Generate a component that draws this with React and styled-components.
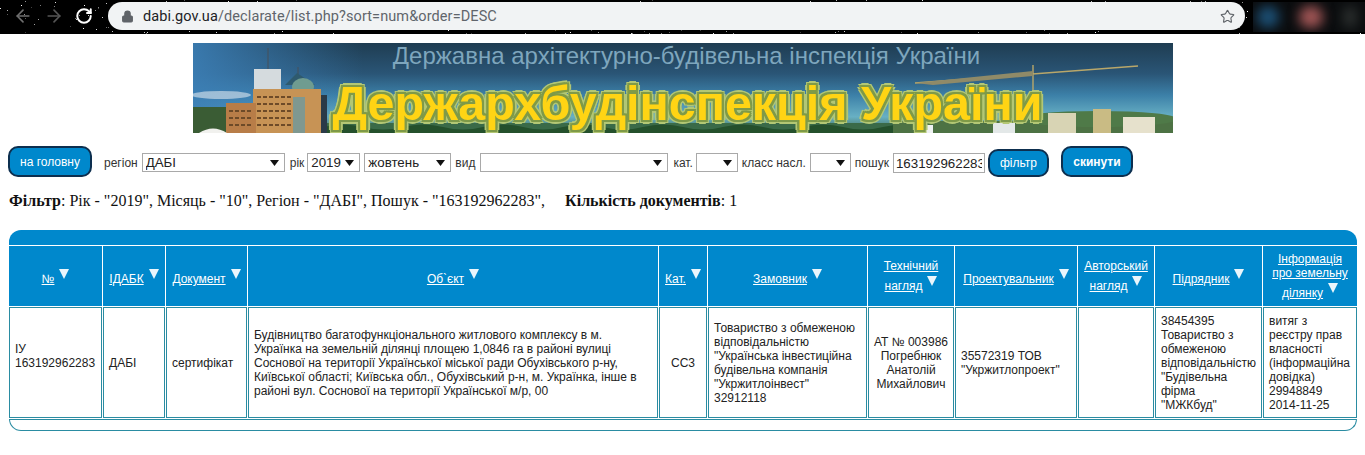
import React from 'react';
import styled, { createGlobalStyle } from 'styled-components';
import { ArrowLeft, ArrowRight, RotateCw, Lock, Star } from 'lucide-react';

const blue = '#0088cc';
const teal = '#2a8ca2';

const selectArrow =
  "url(\"data:image/svg+xml,%3Csvg xmlns='http://www.w3.org/2000/svg' width='9' height='6'%3E%3Cpath d='M0 0h9L4.5 6z' fill='%23111'/%3E%3C/svg%3E\")";

const columns = [
  { width: 93, title: ['№'] },
  { width: 62, title: ['ІДАБК'] },
  { width: 81, title: ['Документ'] },
  { width: 410, title: ['Об`єкт'] },
  { width: 48, title: ['Кат.'] },
  { width: 159, title: ['Замовник'] },
  { width: 86, title: ['Технічний', 'нагляд'] },
  { width: 122, title: ['Проектувальник'] },
  { width: 76, title: ['Авторський', 'нагляд'] },
  { width: 107, title: ['Підрядник'] },
  { width: 94, title: ['Інформація', 'про земельну', 'ділянку'] },
];

const row = [
  { lines: ['ІУ', '163192962283', '\u00a0'] },
  { lines: ['ДАБІ'] },
  { lines: ['сертифікат'] },
  {
    lines: [
      'Будівництво багатофункціонального житлового комплексу в м. Українка на земельній ділянці площею 1,0846 га в районі вулиці Соснової на території Української міської ради Обухівського р-ну, Київської області; Київська обл., Обухівський р-н, м. Українка, інше в районі вул. Соснової на території Української м/р, 00',
    ],
  },
  { lines: ['СС3'], center: true },
  { lines: ['Товариство з обмеженою відповідальністю "Українська інвестиційна будівельна компанія "Укржитлоінвест" 32912118'] },
  { lines: ['АТ № 003986 Погребнюк Анатолій Михайлович'], center: true },
  { lines: ['35572319 ТОВ "Укржитлопроект"'] },
  { lines: [''] },
  { lines: ['38454395 Товариство з обмеженою відповідальністю "Будівельна', 'фірма', '"МЖКбуд"'] },
  { lines: ['витяг з реєстру прав власності (інформаційна довідка) 29948849 2014-11-25'] },
];

const GlobalStyle = createGlobalStyle`
  html, body {
    margin: 0;
    padding: 0;
    background: #fff;
    font-family: "Liberation Sans", Arial, sans-serif;
    overflow: hidden;
  }
`;

const Page = styled.div`
  width: 1365px;
  height: 455px;
  overflow: hidden;
`;

const BrowserBar = styled.div`
  position: relative;
  height: 34px;
  background: #000;
  display: flex;
  align-items: flex-start;
  overflow: hidden;
`;

const Stars = styled.svg`
  position: absolute;
  left: 0;
  top: 0;
`;

const NavButtons = styled.div`
  position: relative;
  flex: none;
  width: 108px;
  height: 32px;
  padding-left: 13px;
  box-sizing: border-box;
  display: flex;
  align-items: center;
  gap: 11px;
`;

const AddressBar = styled.div`
  position: relative;
  flex: none;
  width: 1137px;
  height: 28px;
  margin-top: 2px;
  padding: 0 10px 0 13px;
  box-sizing: border-box;
  background: #f1f3f4;
  border-radius: 14px;
  display: flex;
  align-items: center;
  font-family: Roboto, "Liberation Sans", sans-serif;
  font-size: 14.5px;
  letter-spacing: 0.1px;
  color: #60656b;
`;

const Host = styled.span`
  margin-left: 9px;
  color: #202124;
`;

const StarButton = styled.span`
  margin-left: auto;
  display: flex;
  color: #5f6368;
`;

const BlurredTabs = styled.div`
  position: relative;
  flex: none;
  box-sizing: border-box;
  margin: 2px 0 0 8px;
  width: 112px;
  height: 30px;
  background: #0b0d0f;
  overflow: hidden;
  display: flex;
  align-items: center;
  gap: 20px;
  padding-left: 4px;
`;

const BlurSpot = styled.div`
  flex: none;
  width: ${(props) => props.$size}px;
  height: 22px;
  border-radius: 10px;
  background: ${(props) => props.$color};
  filter: blur(6px);
`;

const Banner = styled.div`
  position: relative;
  width: 980px;
  height: 90px;
  margin: 9px 0 0 193px;
  overflow: hidden;
  display: flex;
  flex-direction: column;
  align-items: center;
  background: linear-gradient(180deg, #1f3d52 0%, #2a5576 34%, #3c80a8 58%, #68b0c4 82%, #3e6a4a 100%);
`;

const BannerArt = styled.svg`
  position: absolute;
  left: 0;
  top: 0;
`;

const BannerSubtitle = styled.div`
  position: relative;
  margin: 0 0 0 7px;
  font-size: 24px;
  line-height: 25px;
  white-space: nowrap;
  color: #7ea6bd;
`;

const BannerTitle = styled.div`
  position: relative;
  margin: 7px 0 0 9px;
  font-size: 48.4px;
  line-height: 56px;
  font-weight: bold;
  white-space: nowrap;
  color: #ffd414;
  text-shadow:
    2px 0 0 #7f9a48, -2px 0 0 #7f9a48, 0 2px 0 #7f9a48, 0 -2px 0 #7f9a48,
    2px 2px 0 #7f9a48, -2px 2px 0 #7f9a48, 2px -2px 0 #7f9a48, -2px -2px 0 #7f9a48,
    4px 0 0 #b3c774, -4px 0 0 #b3c774, 0 4px 0 #b3c774, 0 -4px 0 #b3c774,
    3px 3px 0 #b3c774, -3px 3px 0 #b3c774, 3px -3px 0 #b3c774, -3px -3px 0 #b3c774;
`;

const FilterForm = styled.form`
  height: 31px;
  margin: 13px 0 0 8px;
  display: flex;
  align-items: flex-end;
  font-size: 12px;
  color: #333;
`;

const Action = styled.button`
  box-sizing: border-box;
  width: ${(props) => props.$width}px;
  height: ${(props) => props.$height || 31}px;
  margin-left: ${(props) => props.$left || 0}px;
  margin-right: ${(props) => props.$right || 0}px;
  padding: 0;
  background: ${blue};
  border: 2px solid #0d2f4f;
  border-radius: 10px;
  color: #fff;
  font-family: inherit;
  font-size: 12px;
  font-weight: ${(props) => (props.$bold ? 'bold' : 'normal')};
`;

const FieldLabel = styled.label`
  margin-left: ${(props) => props.$left}px;
  margin-right: ${(props) => props.$right}px;
  margin-bottom: 7px;
  line-height: 14px;
  white-space: nowrap;
`;

const Select = styled.select`
  box-sizing: border-box;
  appearance: none;
  width: ${(props) => props.$width}px;
  height: 19px;
  margin: 0 0 5px ${(props) => props.$left || 0}px;
  padding: 0 0 0 3px;
  background: #fff ${selectArrow} no-repeat right 5px center;
  border: 1px solid #a9a9a9;
  border-radius: 0;
  font-family: inherit;
  font-size: 13.33px;
  color: #222;
`;

const SearchInput = styled.input`
  box-sizing: border-box;
  width: 92px;
  height: 20px;
  margin: 0 3px 4px 0;
  padding: 0 2px;
  border: 1px solid #a9a9a9;
  font-family: inherit;
  font-size: 13.33px;
  color: #222;
`;

const FilterSummary = styled.p`
  margin: 15px 0 0 9px;
  font-family: "Liberation Serif", "Times New Roman", serif;
  font-size: 16px;
  line-height: 18px;
  color: #111;
`;

const CountLabel = styled.span`
  margin-left: 20px;
`;

const Board = styled.section`
  width: 1348px;
  margin: 20px 0 0 9px;
`;

const BoardTop = styled.div`
  height: 15px;
  background: ${blue};
  border-radius: 12px 12px 0 0;
`;

const BoardBottom = styled.div`
  box-sizing: border-box;
  height: 12px;
  border: 1px solid ${teal};
  border-radius: 0 0 12px 12px;
`;

const Table = styled.table`
  width: 1350px;
  margin: 0 -1px;
  table-layout: fixed;
  border-collapse: separate;
  border-spacing: 1px;
  font-size: 12px;
`;

const HeadCell = styled.th`
  box-sizing: border-box;
  height: 60px;
  padding: 0 2px;
  background: ${blue};
  font-weight: normal;
  line-height: 14px;
  text-align: center;
  vertical-align: middle;
  color: #fff;
`;

const SortLink = styled.a`
  color: #fff;
  text-decoration: underline;
`;

const SortArrow = styled.span`
  display: inline-block;
  width: 0;
  height: 0;
  margin: 3px 0 0 5px;
  border-left: 5.5px solid transparent;
  border-right: 5.5px solid transparent;
  border-top: 10px solid #eaf6fc;
  vertical-align: 4px;
`;

const Cell = styled.td`
  box-sizing: border-box;
  height: 111px;
  padding: 0 5px;
  border: 1px solid ${teal};
  line-height: 14px;
  vertical-align: middle;
  text-align: ${(props) => (props.$center ? 'center' : 'left')};
  color: #222;
`;

// фон шапки: зоряне небо за адресним рядком
const starDots = (() => {
  let seed = 17;
  const next = () => {
    seed = (seed * 16807) % 2147483647;
    return seed / 2147483647;
  };
  return Array.from({ length: 420 }, () => ({
    x: Math.round(next() * 1365),
    y: Math.round(next() * 34),
    o: 0.25 + next() * 0.75,
  }));
})();

function BannerDrawing() {
  return (
    <BannerArt width="980" height="90" viewBox="0 0 980 90">
      <defs>
        <linearGradient id="skyLeft" x1="0" x2="1" y1="0" y2="0">
          <stop offset="0" stopColor="#3c7fb6" stopOpacity="0.9" />
          <stop offset="1" stopColor="#3c7fb6" stopOpacity="0" />
        </linearGradient>
      </defs>
      <rect width="170" height="78" fill="url(#skyLeft)" />
      <ellipse cx="28" cy="52" rx="30" ry="4" fill="#dfe8ee" opacity="0.6" />
      <rect x="0" y="64" width="130" height="26" fill="#3a5c34" />
      <rect x="130" y="80" width="620" height="10" fill="#3a6a48" />
      <path d="M130 84 q20 -5 40 0 t40 0 t40 0 t40 0 t40 0 t40 0 t40 0 t40 0 t40 0 t40 0 t40 0 t40 0 t40 0 t40 0 t40 0 V90 H130Z" fill="#24502c" />
      <rect x="61" y="26" width="27" height="28" fill="#d5dbde" />
      <path d="M75 5 L75 26 M105 24 L105 36" stroke="#46505a" strokeWidth="1" />
      <path d="M92 42 L104 30 L122 42 Z" fill="#2e5a6e" />
      <ellipse cx="110" cy="44" rx="11" ry="9" fill="#6f9c90" />
      <rect x="60" y="46" width="68" height="44" fill="#c79355" />
      <rect x="33" y="60" width="30" height="30" fill="#b87d48" />
      <rect x="100" y="54" width="12" height="36" fill="#7f9890" />
      <path d="M64 54 H98 M64 61 H98 M64 68 H98 M64 75 H98 M64 82 H98 M36 68 H60 M36 75 H60 M36 82 H60" stroke="#6d4a28" strokeWidth="2" strokeDasharray="4 2" />
      <path d="M128 52 h6 v38 h-6z" fill="#2a3a48" />
      <path d="M6 90 q14 -9 28 0 z" fill="#f1f1ee" />
      <path d="M722 40 L945 23 M840 22 V72" stroke="#b9a76a" strokeWidth="1.4" fill="none" />
      <path d="M722 40 L840 28 L840 33 L740 42 Z" fill="#8f8a68" />
      <rect x="700" y="78" width="280" height="12" fill="#4d7244" />
      <ellipse cx="905" cy="76" rx="80" ry="8" fill="#4f7a48" />
      <rect x="855" y="70" width="28" height="20" fill="#d8d4b4" />
      <rect x="900" y="66" width="18" height="24" fill="#c9bb84" />
      <rect x="930" y="74" width="32" height="16" fill="#e6e1cc" />
      <rect x="800" y="80" width="22" height="10" fill="#e3e8e8" />
      <rect x="722" y="82" width="18" height="8" fill="#eef1f1" />
    </BannerArt>
  );
}

function App() {
  return (
    <Page>
      <GlobalStyle />
      <BrowserBar>
        <Stars width="1365" height="34">
          {starDots.map((dot, i) => (
            <rect key={i} x={dot.x} y={dot.y} width="1" height="1" fill="#fff" opacity={dot.o} />
          ))}
        </Stars>
        <NavButtons>
          <ArrowLeft size={20} color="#6f6f6f" />
          <ArrowRight size={20} color="#555" />
          <RotateCw size={18} color="#fff" strokeWidth={2.6} />
        </NavButtons>
        <AddressBar>
          <Lock size={13} color="#5f6368" fill="#5f6368" />
          <Host>dabi.gov.ua</Host>
          /declarate/list.php?sort=num&amp;order=DESC
          <StarButton>
            <Star size={15} strokeWidth={1.8} />
          </StarButton>
        </AddressBar>
        <BlurredTabs>
          <BlurSpot $size={22} $color="#1c4f74" />
          <BlurSpot $size={24} $color="#a05555" />
          <BlurSpot $size={14} $color="#2b2f2e" />
        </BlurredTabs>
      </BrowserBar>

      <Banner>
        <BannerDrawing />
        <BannerSubtitle>Державна архітектурно-будівельна інспекція України</BannerSubtitle>
        <BannerTitle>Держархбудінспекція України</BannerTitle>
      </Banner>

      <FilterForm onSubmit={(e) => e.preventDefault()}>
        <Action type="button" $width={84}>на головну</Action>
        <FieldLabel $left={12} $right={4}>регіон</FieldLabel>
        <Select $width={143} defaultValue="ДАБІ"><option>ДАБІ</option></Select>
        <FieldLabel $left={5} $right={3}>рік</FieldLabel>
        <Select $width={53} defaultValue="2019"><option>2019</option></Select>
        <Select $width={87} $left={4} defaultValue="жовтень"><option>жовтень</option></Select>
        <FieldLabel $left={4} $right={5}>вид</FieldLabel>
        <Select $width={188}><option></option></Select>
        <FieldLabel $left={5} $right={3}>кат.</FieldLabel>
        <Select $width={42}><option></option></Select>
        <FieldLabel $left={4} $right={4}>класс насл.</FieldLabel>
        <Select $width={41}><option></option></Select>
        <FieldLabel $left={4} $right={4}>пошук</FieldLabel>
        <SearchInput defaultValue="163192962283" />
        <Action type="submit" $width={61} $height={28} $right={12}>фільтр</Action>
        <Action type="button" $width={72} $bold>скинути</Action>
      </FilterForm>

      <FilterSummary>
        <b>Фільтр</b>: Рік - "2019", Місяць - "10", Регіон - "ДАБІ", Пошук - "163192962283",
        <CountLabel><b>Кількість документів</b>: 1</CountLabel>
      </FilterSummary>

      <Board>
        <BoardTop />
        <Table>
          <colgroup>
            {columns.map((col) => <col key={col.title.join()} width={col.width} />)}
          </colgroup>
          <thead>
            <tr>
              {columns.map((col) => (
                <HeadCell key={col.title.join()}>
                  {col.title.map((line, i) => (
                    <React.Fragment key={line}>
                      {i > 0 && <br />}
                      <SortLink href="#">{line}</SortLink>
                    </React.Fragment>
                  ))}
                  <SortArrow />
                </HeadCell>
              ))}
            </tr>
          </thead>
          <tbody>
            <tr>
              {row.map((cell, i) => (
                <Cell key={i} $center={cell.center}>
                  {cell.lines.map((line, n) => (
                    <React.Fragment key={n}>
                      {n > 0 && <br />}
                      {line}
                    </React.Fragment>
                  ))}
                </Cell>
              ))}
            </tr>
          </tbody>
        </Table>
        <BoardBottom />
      </Board>
    </Page>
  );
}

export default App;
